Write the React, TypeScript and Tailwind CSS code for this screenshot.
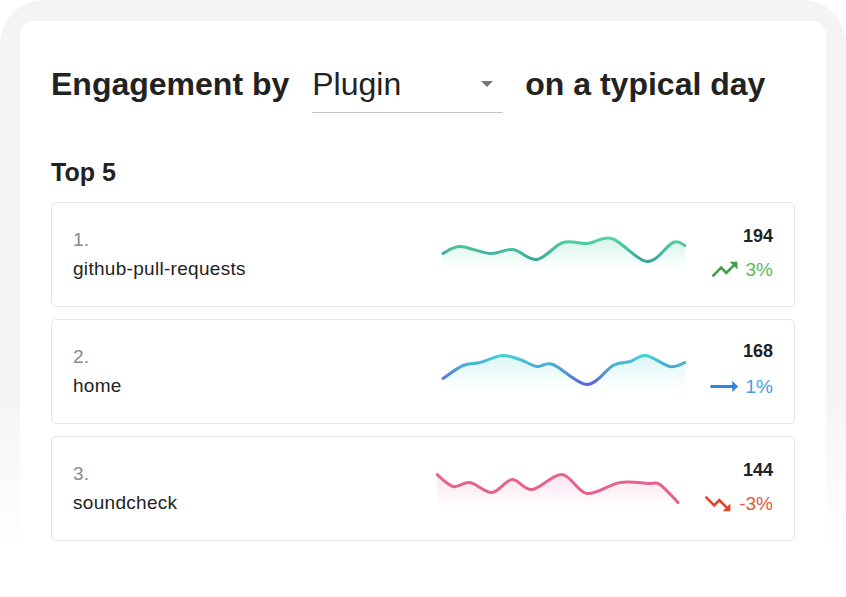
import { MdTrendingDown, MdTrendingFlat, MdTrendingUp } from "react-icons/md";

type Pt = [number, number];

const smooth = (pts: Pt[]) => {
  let d = `M${pts[0][0]},${pts[0][1]}`;
  for (let i = 0; i < pts.length - 1; i++) {
    const p0 = pts[i - 1] || pts[i];
    const p1 = pts[i];
    const p2 = pts[i + 1];
    const p3 = pts[i + 2] || p2;
    const c1x = p1[0] + (p2[0] - p0[0]) / 6;
    const c1y = p1[1] + (p2[1] - p0[1]) / 6;
    const c2x = p2[0] - (p3[0] - p1[0]) / 6;
    const c2y = p2[1] - (p3[1] - p1[1]) / 6;
    d += ` C${c1x},${c1y} ${c2x},${c2y} ${p2[0]},${p2[1]}`;
  }
  return d;
};

const rows = [
  {
    rank: "1.",
    name: "github-pull-requests",
    count: 194,
    change: "3%",
    trend: "up",
    top: "#55d8a8",
    bottom: "#389a9a",
    fill: "#cdf3e3",
    base: 40.5,
    points: [
      [7, 23.5], [24, 16.5], [54, 23.5], [77, 19.5], [101, 29.5], [127, 12.5],
      [151, 13.5], [176, 8.5], [211, 31.5], [237, 12.5], [249, 15.5],
    ] as Pt[],
  },
  {
    rank: "2.",
    name: "home",
    count: 168,
    change: "1%",
    trend: "flat",
    top: "#3fdcd2",
    bottom: "#5a6bd6",
    fill: "#cff5f3",
    base: 41.5,
    points: [
      [7, 31.5], [27, 18.5], [44, 15.5], [66, 8.5], [84, 12.5], [101, 19.5],
      [117, 17.5], [151, 37.5], [177, 18.5], [194, 14.5], [210, 8.5], [234, 19.5],
      [249, 15.5],
    ] as Pt[],
  },
  {
    rank: "3.",
    name: "soundcheck",
    count: 144,
    change: "-3%",
    trend: "down",
    top: "#ea6590",
    bottom: "#e55f8c",
    fill: "#fbdbe8",
    base: 43.5,
    points: [
      [1, 10.5], [17, 22.5], [34, 18.5], [56, 28.5], [76, 15.5], [96, 25.5],
      [126, 10.5], [151, 29.5], [184, 18.5], [214, 19.5], [224, 20.5], [242, 38.5],
    ] as Pt[],
  },
];

const Spark = ({ row, id }: { row: (typeof rows)[number]; id: string }) => {
  const line = smooth(row.points);
  const first = row.points[0];
  const last = row.points[row.points.length - 1];
  const area = `${line} L${last[0]},${row.base} L${first[0]},${row.base} Z`;
  return (
    <svg width="250" height="50" viewBox="0 0 250 50" className="shrink-0">
      <defs>
        <linearGradient id={`s${id}`} x1="0" y1="6" x2="0" y2="36" gradientUnits="userSpaceOnUse">
          <stop offset="0" stopColor={row.top} />
          <stop offset="1" stopColor={row.bottom} />
        </linearGradient>
        <linearGradient id={`f${id}`} x1="0" y1="8" x2="0" y2={row.base} gradientUnits="userSpaceOnUse">
          <stop offset="0" stopColor={row.fill} stopOpacity="0.8" />
          <stop offset="1" stopColor={row.fill} stopOpacity="0" />
        </linearGradient>
      </defs>
      <path d={area} fill={`url(#f${id})`} />
      <path d={line} fill="none" stroke={`url(#s${id})`} strokeWidth="3" strokeLinecap="round" />
    </svg>
  );
};

const Change = ({ trend, value }: { trend: string; value: string }) => {
  if (trend === "up")
    return (
      <div className="flex items-center gap-[6px] text-[#5cb85f]">
        <MdTrendingUp size={31} className="text-[#3f9f4a]" />
        <span>{value}</span>
      </div>
    );
  if (trend === "flat")
    return (
      <div className="flex items-center gap-[5px] text-[#4a9ce6]">
        <MdTrendingFlat size={35} className="text-[#2f88dd]" />
        <span>{value}</span>
      </div>
    );
  return (
    <div className="flex items-center gap-[6px] text-[#e2573f]">
      <MdTrendingDown size={31} className="text-[#df4433]" />
      <span>{value}</span>
    </div>
  );
};

export default function App() {
  return (
    <div className="h-[597px] w-[846px] bg-white font-['Liberation_Sans',Arial,sans-serif] text-[#222]">
      <div className="h-full rounded-[44px] bg-linear-to-b from-[#f4f4f4] from-65% to-white to-92% px-[20px] pt-[21px]">
        <div className="h-[527px] rounded-[14px] bg-white px-[31px] pt-[43px]">
          <div className="flex items-start">
            <h1 className="text-[32px] font-bold leading-[40px]">Engagement by</h1>
            <div className="ml-[23px] flex w-[191px] items-center justify-between border-b border-[#c6c6c6] pb-[8px]">
              <span className="text-[32px] leading-[40px]">Plugin</span>
              <span className="mr-[10px] h-0 w-0 border-x-[6px] border-t-[6px] border-x-transparent border-t-[#777]" />
            </div>
            <span className="ml-[22px] text-[32px] font-bold leading-[40px]">on a typical day</span>
          </div>

          <h2 className="mt-[44px] text-[25px] font-bold leading-[30px]">Top 5</h2>

          <div className="mt-[15px] flex flex-col gap-[12px]">
            {rows.map((row, i) => (
              <div
                key={row.rank}
                className="flex h-[105px] items-center rounded-[5px] border border-[#e6e6e6] px-[21px]"
              >
                <div className="flex w-[363px] flex-col gap-[5px] text-[19px] leading-[24px] tracking-[0.3px]">
                  <span className="text-[#8a8a8a]">{row.rank}</span>
                  <span>{row.name}</span>
                </div>
                <Spark row={row} id={String(i)} />
                <div className="flex flex-1 flex-col items-end gap-[6px] text-[19px] leading-[24px]">
                  <span className="text-[18px] font-bold">{row.count}</span>
                  <Change trend={row.trend} value={row.change} />
                </div>
              </div>
            ))}
          </div>
        </div>
      </div>
    </div>
  );
}
